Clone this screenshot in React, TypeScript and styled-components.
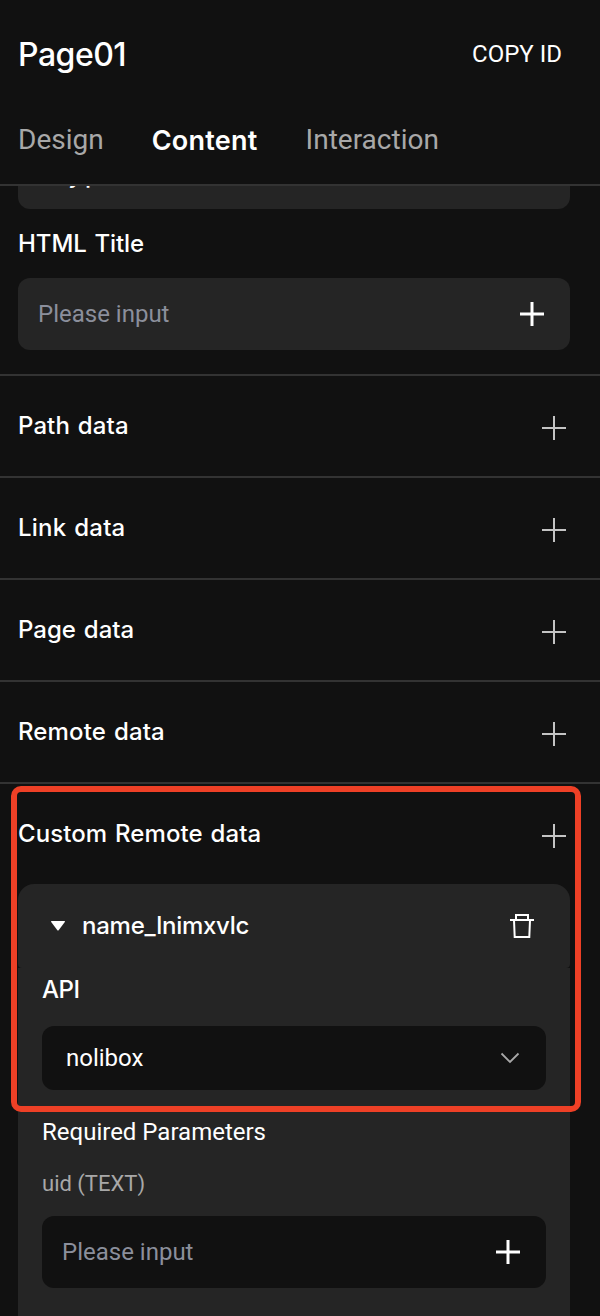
import React from 'react';
import styled, { createGlobalStyle } from 'styled-components';

const Global = createGlobalStyle`
  * { box-sizing: border-box; }
  body { margin: 0; background: #111; color: #fff; font-family: Roboto, "Liberation Sans", sans-serif; overflow: hidden; }
`;

const Panel = styled.main`
  position: relative;
  width: 600px;
  height: 1316px;
  overflow: hidden;
  background: #111;
`;
const Header = styled.header`
  height: 186px;
  padding: 30px 38px 0 18px;
  border-bottom: 2px solid #333;
`;
const TitleRow = styled.div`
  display: flex;
  align-items: center;
  justify-content: space-between;
  height: 48px;
`;
const Title = styled.h1`
  margin: 0;
  padding-top: 1px;
  font: 500 32px/48px Inter, sans-serif;
  letter-spacing: -0.5px;
`;
const CopyButton = styled.span`
  font-size: 24px;
  line-height: 48px;
`;
const Tabs = styled.nav`
  display: flex;
  gap: 48px;
  margin-top: 42px;
`;
const Tab = styled.span<{ $active?: boolean }>`
  padding-top: ${p => (p.$active ? 1 : 0)}px;
  font: ${p => (p.$active ? '600 27px/40px Inter' : '400 28px/40px Roboto')}, sans-serif;
  letter-spacing: ${p => (p.$active ? 0.25 : 0)}px;
  color: ${p => (p.$active ? '#fff' : '#a8a8a8')};
`;
const Scroll = styled.div`
  height: 1130px;
  overflow: hidden;
`;
const TitleSection = styled.section`
  height: 190px;
  padding: 0 30px 0 18px;
  border-bottom: 2px solid #333;
`;
const ClippedField = styled.div`
  height: 23px;
  padding-left: 33px;
  overflow: hidden;
  border-radius: 0 0 12px 12px;
  background: #252525;
`;
const ClippedText = styled.div`
  margin-top: -25px;
  font: 500 24px/28px Inter, sans-serif;
  letter-spacing: 3px;
`;
const Label = styled.div<{ $track?: number }>`
  font: 500 24px/32px Inter, sans-serif;
  letter-spacing: ${p => p.$track ?? 0.08}px;
  word-spacing: 1.4px;
  white-space: nowrap;
`;
const FieldLabel = styled(Label)`
  margin: 19px 0 18px;
`;
const Field = styled.div<{ $dark?: boolean }>`
  display: flex;
  align-items: center;
  justify-content: space-between;
  height: 72px;
  padding: 0 26px 0 20px;
  border-radius: 12px;
  background: ${p => (p.$dark ? '#111' : '#252525')};
  color: #8b8f9c;
  font-size: 24px;
`;
const Row = styled.section`
  display: flex;
  align-items: center;
  justify-content: space-between;
  height: 102px;
  padding: 0 34px 0 18px;
  border-bottom: 2px solid #333;
`;
const RowHead = styled(Row)`
  height: 100px;
  border: 0;
`;
const Card = styled.section`
  margin: 0 30px 0 18px;
`;
const CardHead = styled.div`
  display: flex;
  align-items: center;
  height: 84px;
  padding: 0 36px 0 32px;
  border-radius: 16px 16px 4px 4px;
  background: #252525;
  svg:last-child { margin-left: auto; }
`;
const Caret = styled.svg`
  margin-right: 16px;
`;
const CardBody = styled.div`
  height: 356px;
  padding: 6px 24px 0;
  background: #252525;
`;
const Select = styled.div`
  display: flex;
  align-items: center;
  justify-content: space-between;
  height: 64px;
  margin-top: 20px;
  padding: 0 26px 0 24px;
  border-radius: 12px;
  background: #111;
  font-size: 24px;
`;
const GroupTitle = styled.div`
  margin-top: 26px;
  font-size: 24px;
  line-height: 32px;
`;
const ParamName = styled.div`
  margin: 20px 0 17px;
  font-size: 22px;
  line-height: 31px;
  color: #a8a8a8;
`;
const Highlight = styled.div`
  position: absolute;
  left: 11px;
  top: 786px;
  width: 570px;
  height: 326px;
  border: 6px solid #ee4026;
  border-radius: 10px;
  pointer-events: none;
`;
const RowPlus = styled.svg`
  position: relative;
  top: 2px;
`;

const Plus = () => (
  <svg width="24" height="24" viewBox="0 0 24 24" stroke="#fff" strokeWidth="3">
    <path d="M12 0V24M0 12H24" />
  </svg>
);
const ThinPlus = () => (
  <RowPlus width="24" height="24" viewBox="0 0 24 24" stroke="#c4c4c4" strokeWidth="2">
    <path d="M12 0V24M0 12H24" />
  </RowPlus>
);

const rows = [
  { name: 'Path data', track: 0.1 },
  { name: 'Link data', track: 0.2 },
  { name: 'Page data', track: 0.02 },
  { name: 'Remote data', track: 0.14 },
];

export default function App() {
  return (
    <Panel>
      <Global />
      <Header>
        <TitleRow>
          <Title>Page01</Title>
          <CopyButton>COPY ID</CopyButton>
        </TitleRow>
        <Tabs>
          <Tab>Design</Tab>
          <Tab $active>Content</Tab>
          <Tab>Interaction</Tab>
        </Tabs>
      </Header>
      <Scroll>
        <TitleSection>
          <ClippedField><ClippedText>Type</ClippedText></ClippedField>
          <FieldLabel $track={-0.08}>HTML Title</FieldLabel>
          <Field>Please input<Plus /></Field>
        </TitleSection>
        {rows.map(r => (
          <Row key={r.name}>
            <Label $track={r.track}>{r.name}</Label>
            <ThinPlus />
          </Row>
        ))}
        <RowHead>
          <Label>Custom Remote data</Label>
          <ThinPlus />
        </RowHead>
        <Card>
          <CardHead>
            <Caret width="16" height="12" viewBox="0 0 16 12" fill="#fff">
              <path d="M1.6 1H14.4Q15.4 1 14.8 1.9L8.8 10Q8 11 7.2 10L1.2 1.9Q.6 1 1.6 1Z" />
            </Caret>
            <Label $track={-0.25}>name_lnimxvlc</Label>
            <svg width="24" height="24" viewBox="0 0 24 24" fill="none" stroke="#fff" strokeWidth="2">
              <path d="M0 6H24M6 6V1H18V6M4 6L4.7 23H19.3L20 6" />
            </svg>
          </CardHead>
          <CardBody>
            <Label $track={-0.4}>API</Label>
            <Select>
              nolibox
              <svg width="20" height="12" viewBox="0 0 20 12" fill="none" stroke="#a8a8a8" strokeWidth="1.8">
                <path d="M1.5 1.5L10 10L18.5 1.5" />
              </svg>
            </Select>
            <GroupTitle>Required Parameters</GroupTitle>
            <ParamName>uid (TEXT)</ParamName>
            <Field $dark>Please input<Plus /></Field>
          </CardBody>
        </Card>
      </Scroll>
      <Highlight />
    </Panel>
  );
}
